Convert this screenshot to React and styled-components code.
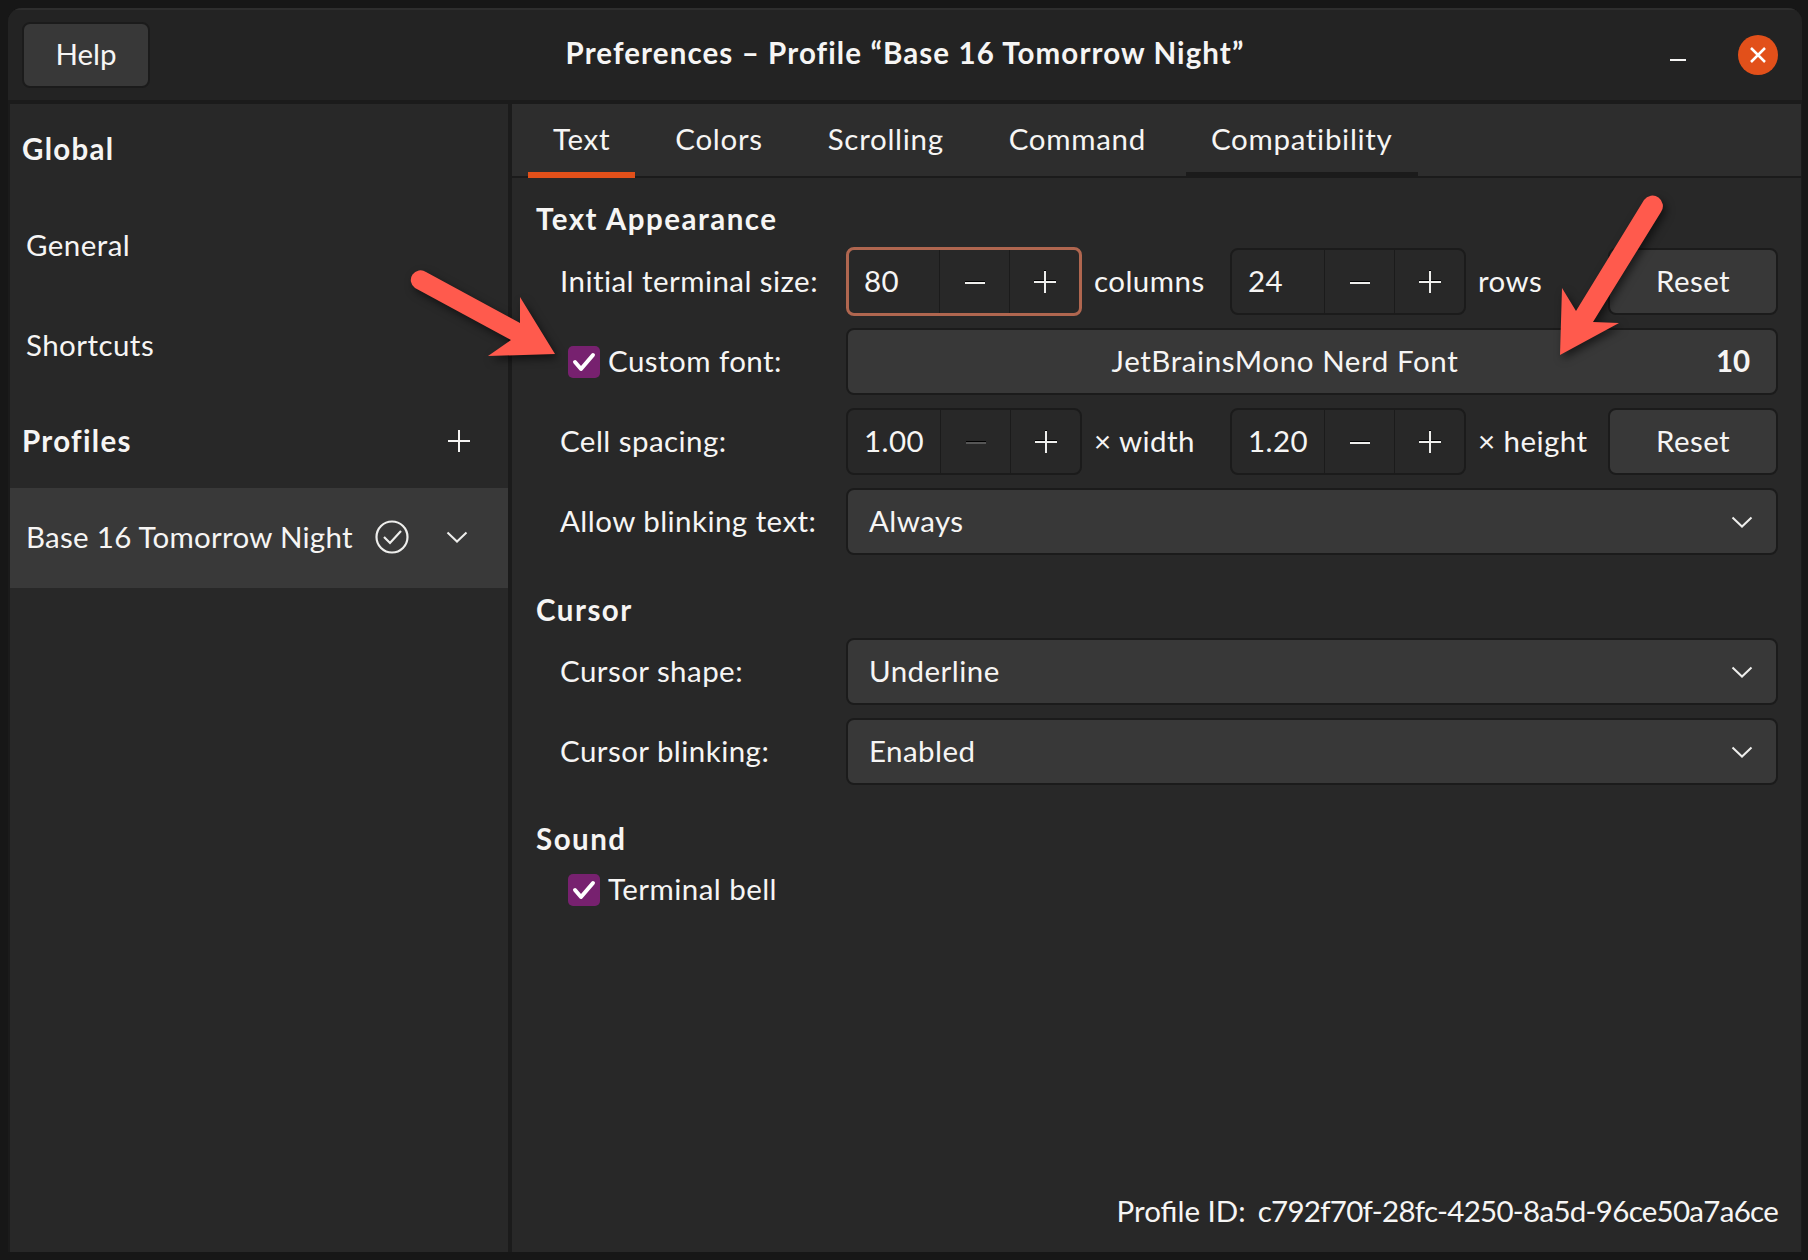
import React from 'react'
import styled, { createGlobalStyle } from 'styled-components'

const GlobalStyle = createGlobalStyle`
  html, body {
    margin: 0;
    background: #171717;
  }
  * {
    box-sizing: border-box;
  }
`

const Page = styled.div`
  position: relative;
  width: 1808px;
  height: 1260px;
  padding: 8px 6px 8px 8px;
  font-family: Lato, "Noto Sans", sans-serif;
  font-size: 29.5px;
  letter-spacing: 0.45px;
  color: #f6f5f4;
`

const Window = styled.div`
  height: 100%;
  display: flex;
  flex-direction: column;
  background: #1b1b1b;
  border-radius: 14px 14px 0 0;
  overflow: hidden;
`

const HeaderBar = styled.header`
  height: 96px;
  flex: none;
  display: grid;
  grid-template-columns: 1fr auto 1fr;
  align-items: center;
  padding: 0 14px;
  background: #232323;
  border-top: 2px solid #2e2e2e;
  border-bottom: 4px solid #1b1b1b;
`

const HelpButton = styled.div`
  width: 128px;
  height: 66px;
  display: flex;
  align-items: center;
  justify-content: center;
  padding-bottom: 4px;
  letter-spacing: 0;
  background: #383838;
  border: 2px solid #1b1b1b;
  border-radius: 8px;
`

const Title = styled.div`
  padding-bottom: 6px;
  font-weight: 700;
  letter-spacing: 1.1px;
`

const WindowControls = styled.div`
  display: flex;
  align-items: center;
  justify-content: flex-end;
  gap: 52px;
  padding-right: 10px;
`

const MinimizeMark = styled.span`
  width: 16px;
  height: 2px;
  margin-top: 10px;
  background: #f6f5f4;
`

const CloseButton = styled.div`
  width: 40px;
  height: 40px;
  border-radius: 50%;
  background: #e2501a;
  display: flex;
  align-items: center;
  justify-content: center;
`

const Main = styled.div`
  flex: 1;
  min-height: 0;
  display: flex;
  gap: 4px;
  padding-left: 2px;
  padding-right: 1px;
`

const Sidebar = styled.aside`
  width: 498px;
  flex: none;
  background: #282828;
  display: flex;
  flex-direction: column;
`

const SideHeading = styled.div`
  height: ${({ $h }) => $h}px;
  flex: none;
  display: flex;
  align-items: center;
  justify-content: space-between;
  padding: 0 37px 2px 12px;
  font-weight: 700;
  letter-spacing: 1.3px;
`

const SideItem = styled.div`
  height: 100px;
  flex: none;
  display: flex;
  align-items: center;
  padding: 0 0 2px 16px;
  background: ${({ $selected }) => ($selected ? '#393939' : 'transparent')};
`

const ProfileName = styled.span`
  width: 349px;
  flex: none;
  padding-bottom: 2px;
  letter-spacing: 0.27px;
`

const ProfileChevron = styled.span`
  margin-left: 37px;
  display: flex;
`

const Content = styled.main`
  flex: 1;
  min-width: 0;
  display: flex;
  flex-direction: column;
  background: #282828;
`

const TabBar = styled.nav`
  height: 74px;
  flex: none;
  display: flex;
  gap: 15px;
  padding-left: 16px;
  background: #2d2d2d;
  border-bottom: 2px solid #1b1b1b;
`

const Tab = styled.div`
  height: 74px;
  padding: 0 25px;
  display: flex;
  align-items: center;
  letter-spacing: 0.7px;
  border-bottom: 6px solid ${({ $state }) => ($state === 'active' ? '#e2501a' : $state === 'hover' ? '#1b1b1b' : 'transparent')};
`

const Panel = styled.div`
  flex: 1;
  min-height: 0;
  display: flex;
  flex-direction: column;
  padding: 24px 23px 24px 24px;
`

const Section = styled.section`
  display: flex;
  flex-direction: column;
  gap: 13px;
  margin-bottom: ${({ $mb }) => $mb}px;
`

const SectionTitle = styled.h2`
  margin: 0 0 ${({ $mb }) => $mb ?? -1}px;
  height: 34px;
  line-height: 34px;
  font-size: 29.5px;
  font-weight: 700;
  letter-spacing: 1.5px;
`

const Row = styled.div`
  height: 67px;
  display: grid;
  grid-template-columns: 286px 1fr;
  align-items: center;
  padding-left: 24px;
`

const RowLabel = styled.span`
  padding-bottom: 3px;
`

const CheckRow = styled(Row)`
  padding-left: 32px;
  grid-template-columns: 278px 1fr;
`

const CheckLabel = styled.div`
  display: flex;
  align-items: center;
  gap: 8px;
  margin-top: ${({ $top }) => $top || 0}px;
  padding-left: ${({ $indent }) => $indent || 0}px;
`

const CheckText = styled.span`
  padding-bottom: 3px;
`

const CheckBox = styled.span`
  width: 32px;
  height: 32px;
  flex: none;
  border-radius: 5px;
  background: #77216f;
  display: flex;
  align-items: center;
  justify-content: center;
`

const Controls = styled.div`
  display: flex;
  align-items: center;
  height: 67px;
`

const Spin = styled.div`
  width: 236px;
  height: ${({ $focused }) => ($focused ? 69 : 67)}px;
  margin: ${({ $focused }) => ($focused ? '-1px 0' : '0')};
  flex: none;
  display: grid;
  grid-template-columns: 1fr 70px 70px;
  border: ${({ $focused }) => ($focused ? '3px solid #b0664f' : '2px solid #1b1b1b')};
  border-radius: 8px;
`

const SpinValue = styled.div`
  display: flex;
  align-items: center;
  padding: 0 0 3px ${({ $focused }) => ($focused ? 15 : 16)}px;
`

const SpinStep = styled.div`
  display: flex;
  align-items: center;
  justify-content: center;
  border-left: 1px solid #1b1b1b;
  color: ${({ $disabled }) => ($disabled ? '#565656' : '#eeeeec')};

  svg {
    filter: drop-shadow(0 -1px 0 #000);
  }
`

const Unit = styled.span`
  width: ${({ $w }) => $w}px;
  flex: none;
  padding: 0 0 3px 12px;
`

const PushButton = styled.div`
  flex: 1;
  height: 67px;
  display: flex;
  align-items: center;
  justify-content: center;
  padding-bottom: 3px;
  background: #383838;
  border: 2px solid #1b1b1b;
  border-radius: 8px;
`

const DropDown = styled(PushButton)`
  justify-content: space-between;
  padding: 0 23px 3px 21px;

  svg {
    margin-top: 3px;
  }
`

const FontName = styled.span`
  flex: 1;
  padding-left: 6px;
  text-align: center;
  letter-spacing: 0.6px;
`

const FontSize = styled.span`
  width: 60px;
  font-weight: 700;
  letter-spacing: 0;
`

const ProfileId = styled.div`
  margin-top: auto;
  height: 34px;
  line-height: 34px;
  display: flex;
  justify-content: flex-end;
  gap: 12px;
  letter-spacing: 0;
`

const IdValue = styled.span`
  letter-spacing: -0.72px;
`

const ArrowLayer = styled.svg`
  position: absolute;
  left: 0;
  top: 0;
  pointer-events: none;
  filter: drop-shadow(3px 4px 4px rgba(0, 0, 0, 0.55));
`

const PlusIcon = () => (
  <svg width="24" height="24" viewBox="0 0 24 24" fill="none" stroke="currentColor" strokeWidth="2">
    <path d="M1 12h22M12 1v22" />
  </svg>
)

const MinusIcon = () => (
  <svg width="24" height="24" viewBox="0 0 24 24" fill="none" stroke="currentColor" strokeWidth="2">
    <path d="M2 13h20" />
  </svg>
)

const ChevronIcon = () => (
  <svg width="22" height="12" viewBox="0 0 22 12" fill="none" stroke="#eeeeec" strokeWidth="2">
    <path d="M1.5 1.5 11 10.5l9.5-9" />
  </svg>
)

const Tick = () => (
  <svg width="24" height="20" viewBox="0 0 24 20" fill="none" stroke="#fff" strokeWidth="4" strokeLinecap="round" strokeLinejoin="round">
    <path d="M3 10l6 7L21 3" />
  </svg>
)

const StepButtons = ({ minusDisabled }) => (
  <>
    <SpinStep $disabled={minusDisabled}><MinusIcon /></SpinStep>
    <SpinStep><PlusIcon /></SpinStep>
  </>
)

const tabs = ['Text', 'Colors', 'Scrolling', 'Command', 'Compatibility']

export default function App() {
  return (
    <Page>
      <GlobalStyle />
      <Window>
        <HeaderBar>
          <HelpButton>Help</HelpButton>
          <Title>Preferences – Profile “Base 16 Tomorrow Night”</Title>
          <WindowControls>
            <MinimizeMark />
            <CloseButton>
              <svg width="18" height="18" viewBox="0 0 18 18" stroke="#fff" strokeWidth="2.5">
                <path d="M2 2l14 14M16 2 2 16" />
              </svg>
            </CloseButton>
          </WindowControls>
        </HeaderBar>
        <Main>
          <Sidebar>
            <SideHeading $h={91}>Global</SideHeading>
            <SideItem>General</SideItem>
            <SideItem>Shortcuts</SideItem>
            <SideHeading $h={93}>
              Profiles
              <PlusIcon />
            </SideHeading>
            <SideItem $selected>
              <ProfileName>Base 16 Tomorrow Night</ProfileName>
              <svg width="34" height="34" viewBox="0 0 34 34" fill="none" stroke="#eeeeec" strokeWidth="2.2">
                <circle cx="17" cy="17" r="15.5" />
                <path d="M9 17l6 6L26 11" />
              </svg>
              <ProfileChevron><ChevronIcon /></ProfileChevron>
            </SideItem>
          </Sidebar>
          <Content>
            <TabBar>
              {tabs.map((tab) => (
                <Tab key={tab} $state={tab === 'Text' ? 'active' : tab === 'Compatibility' ? 'hover' : ''}>{tab}</Tab>
              ))}
            </TabBar>
            <Panel>
              <Section $mb={38}>
                <SectionTitle>Text Appearance</SectionTitle>
                <Row>
                  <RowLabel>Initial terminal size:</RowLabel>
                  <Controls>
                    <Spin $focused>
                      <SpinValue $focused>80</SpinValue>
                      <StepButtons />
                    </Spin>
                    <Unit $w={148}>columns</Unit>
                    <Spin>
                      <SpinValue>24</SpinValue>
                      <StepButtons />
                    </Spin>
                    <Unit $w={142}>rows</Unit>
                    <PushButton>Reset</PushButton>
                  </Controls>
                </Row>
                <CheckRow>
                  <CheckLabel>
                    <CheckBox><Tick /></CheckBox>
                    <CheckText>Custom font:</CheckText>
                  </CheckLabel>
                  <Controls>
                    <PushButton>
                      <FontName>JetBrainsMono Nerd Font</FontName>
                      <FontSize>10</FontSize>
                    </PushButton>
                  </Controls>
                </CheckRow>
                <Row>
                  <RowLabel>Cell spacing:</RowLabel>
                  <Controls>
                    <Spin>
                      <SpinValue>1.00</SpinValue>
                      <StepButtons minusDisabled />
                    </Spin>
                    <Unit $w={148}>× width</Unit>
                    <Spin>
                      <SpinValue>1.20</SpinValue>
                      <StepButtons />
                    </Spin>
                    <Unit $w={142}>× height</Unit>
                    <PushButton>Reset</PushButton>
                  </Controls>
                </Row>
                <Row>
                  <RowLabel>Allow blinking text:</RowLabel>
                  <Controls>
                    <DropDown>Always<ChevronIcon /></DropDown>
                  </Controls>
                </Row>
              </Section>
              <Section $mb={37}>
                <SectionTitle $mb={-2}>Cursor</SectionTitle>
                <Row>
                  <RowLabel>Cursor shape:</RowLabel>
                  <Controls>
                    <DropDown>Underline<ChevronIcon /></DropDown>
                  </Controls>
                </Row>
                <Row>
                  <RowLabel>Cursor blinking:</RowLabel>
                  <Controls>
                    <DropDown>Enabled<ChevronIcon /></DropDown>
                  </Controls>
                </Row>
              </Section>
              <Section $mb={0}>
                <SectionTitle>Sound</SectionTitle>
                <CheckLabel $indent={32} $top={3}>
                  <CheckBox><Tick /></CheckBox>
                  <CheckText>Terminal bell</CheckText>
                </CheckLabel>
              </Section>
              <ProfileId>
                <span>Profile ID:</span>
                <IdValue>c792f70f-28fc-4250-8a5d-96ce50a7a6ce</IdValue>
              </ProfileId>
            </Panel>
          </Content>
        </Main>
      </Window>
      <ArrowLayer width="1808" height="1260" viewBox="0 0 1808 1260">
        <path fill="#ff5a4d" d="M426 272 520 323 520 297 555 354 488 356 511 340 415 288A9.5 9.5 0 0 1 426 272Z" />
        <path fill="#ff5a4d" d="M1644 200 1576 311 1562 288 1560 355 1619 323 1593 322 1661 212A9.5 9.5 0 0 0 1644 200Z" />
      </ArrowLayer>
    </Page>
  )
}
